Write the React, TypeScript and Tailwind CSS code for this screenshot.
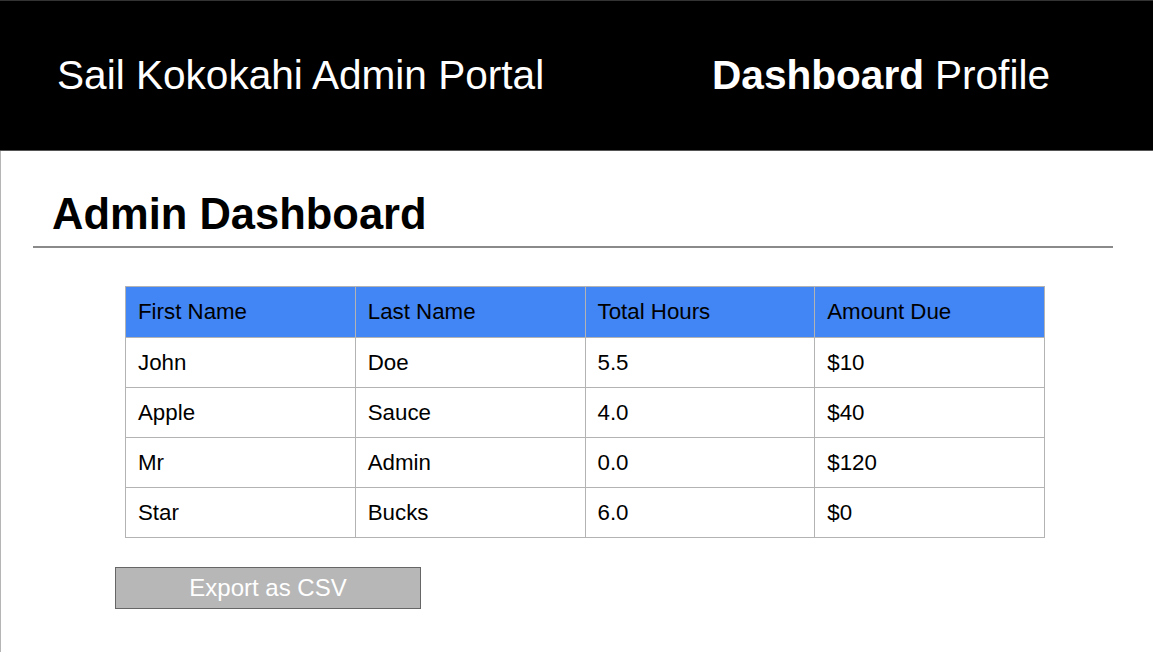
const rows = [
  ["John", "Doe", "5.5", "$10"],
  ["Apple", "Sauce", "4.0", "$40"],
  ["Mr", "Admin", "0.0", "$120"],
  ["Star", "Bucks", "6.0", "$0"],
];

const headers = ["First Name", "Last Name", "Total Hours", "Amount Due"];

export default function App() {
  return (
    <div className="flex h-[652px] w-full flex-col overflow-hidden bg-white font-['Liberation_Sans',Arial,sans-serif] text-black">
      {/* top bar */}
      <header className="flex h-[151px] shrink-0 items-center justify-between border-t border-b border-t-[#333] border-b-[#555] bg-black pl-[57px] pr-[103px] text-[40.6px] leading-none text-white">
        <span>Sail Kokokahi Admin Portal</span>
        <nav className="flex gap-[11px]">
          <span className="font-bold">Dashboard</span>
          <span>Profile</span>
        </nav>
      </header>

      <main className="flex-1 border-l border-[#b5b5b5]">
        <div className="ml-[32px] mr-[40px] mt-[39px]">
          <h1 className="pl-[19px] text-[43.5px] font-bold leading-[48px]">Admin Dashboard</h1>
          <div className="mt-[8px] h-[2px] bg-[#8a8a8a]" />
        </div>

        <table className="ml-[124px] mt-[38px] w-[920px] table-fixed border-collapse text-[22.3px]">
          <thead>
            <tr className="h-[51px] bg-[#4285f4]">
              {headers.map((h) => (
                <th key={h} className="border border-[#b3b3b3] px-[12px] text-left font-normal">
                  {h}
                </th>
              ))}
            </tr>
          </thead>
          <tbody>
            {rows.map((r) => (
              <tr key={r[0]} className="h-[50px]">
                {r.map((c, i) => (
                  <td key={i} className="border border-[#b3b3b3] px-[12px]">
                    {c}
                  </td>
                ))}
              </tr>
            ))}
          </tbody>
        </table>

        <button className="ml-[114px] mt-[29px] flex h-[42px] w-[306px] items-center justify-center border border-[#666] bg-[#b7b7b7] text-[24px] text-white">
          Export as CSV
        </button>
      </main>
    </div>
  );
}
